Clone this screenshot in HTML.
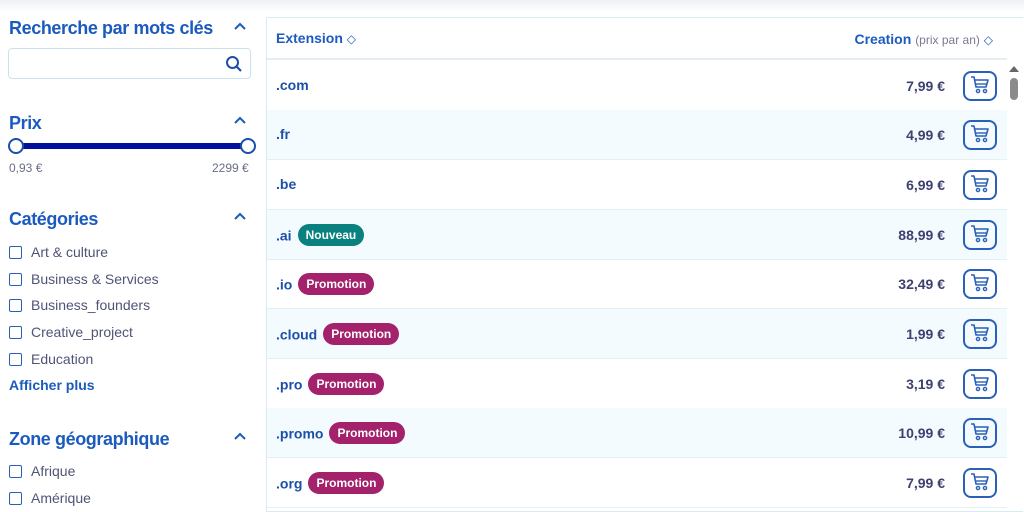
<!DOCTYPE html><html><head><meta charset="utf-8"><style>
*{box-sizing:border-box;margin:0;padding:0}
body{width:1024px;height:508px;overflow:hidden;background:#fff;font-family:"Liberation Sans",sans-serif;position:relative}
.top{position:absolute;left:0;top:0;width:1024px;height:12px;background:linear-gradient(#eef0f6,#fff)}
.h{position:absolute;left:9px;font-size:18px;font-weight:bold;color:#1b5bbf;letter-spacing:-0.4px}
.car{position:absolute;left:234px;width:12px;height:8px}
.search{position:absolute;left:8px;top:48px;width:243px;height:31px;border:1px solid #c8e3ee;border-radius:4px}
.cb{position:absolute;left:9px;font-size:14px;color:#505474}
.cb i{position:absolute;left:0;top:2px;width:13px;height:13px;border:1.6px solid #2a5db5;border-radius:2px}
.cb span{position:absolute;left:22px;top:0;white-space:nowrap}
.tbl{position:absolute;left:266px;top:17px;width:757px;height:495px;border:1px solid #d6ecf2;border-right:none}
.hd{position:absolute;left:0;top:0;width:740px;height:42px;border-bottom:2px solid #e4eef2;font-size:14px;font-weight:bold;color:#1b5bbf}
.row{position:absolute;left:0;width:740px;height:50px;border-bottom:1px solid #e3f0f4}
.row.a{background:#f4fbfe}
.ext{position:absolute;left:9px;top:16px;font-size:14px;font-weight:bold;color:#1b4fa8}
.tag{display:inline-block;margin-left:6px;padding:0 8px;height:22px;line-height:22px;border-radius:11px;color:#fff;font-size:12px;font-weight:bold;vertical-align:middle;position:relative;top:-2px}
.n{background:#08817f}.p{background:#a3226b}
.pr{position:absolute;right:62px;top:17px;font-size:14px;font-weight:bold;color:#3d4170}
.btn{position:absolute;left:696px;top:10px;width:34px;height:30px;border:2px solid #2a60b8;border-radius:8px}
</style></head><body>
<div class="top"></div>
<div class="h" style="top:18px">Recherche par mots clés</div>
<svg class="car" style="top:22px" viewBox="0 0 12 8"><path d="M1 7L6 2L11 7" fill="none" stroke="#1b5bbf" stroke-width="2"/></svg>
<div class="search"><svg style="position:absolute;left:216px;top:6px" width="18" height="18" viewBox="0 0 18 18"><circle cx="7.5" cy="7.5" r="5.5" fill="none" stroke="#1b4fa8" stroke-width="2"/><path d="M11.5 11.5L16 16" stroke="#1b4fa8" stroke-width="2.2"/></svg></div>
<div class="h" style="top:113px">Prix</div>
<svg class="car" style="top:116px" viewBox="0 0 12 8"><path d="M1 7L6 2L11 7" fill="none" stroke="#1b5bbf" stroke-width="2"/></svg>
<div style="position:absolute;left:16px;top:143px;width:232px;height:6px;background:#02109c"></div>
<div style="position:absolute;left:8px;top:138px;width:16px;height:16px;border:2px solid #1b4fa8;border-radius:50%;background:#fff"></div>
<div style="position:absolute;left:240px;top:138px;width:16px;height:16px;border:2px solid #1b4fa8;border-radius:50%;background:#fff"></div>
<div style="position:absolute;left:9px;top:161px;font-size:12px;color:#6a6e86">0,93 €</div>
<div style="position:absolute;left:212px;top:161px;font-size:12px;color:#6a6e86">2299 €</div>
<div class="h" style="top:209px">Catégories</div>
<svg class="car" style="top:212px" viewBox="0 0 12 8"><path d="M1 7L6 2L11 7" fill="none" stroke="#1b5bbf" stroke-width="2"/></svg>
<div class="cb" style="top:244px"><i></i><span>Art &amp; culture</span></div>
<div class="cb" style="top:271px"><i></i><span>Business &amp; Services</span></div>
<div class="cb" style="top:297px"><i></i><span>Business_founders</span></div>
<div class="cb" style="top:324px"><i></i><span>Creative_project</span></div>
<div class="cb" style="top:351px"><i></i><span>Education</span></div>
<div style="position:absolute;left:9px;top:377px;font-size:14px;font-weight:bold;color:#1b5bbf">Afficher plus</div>
<div class="h" style="top:429px">Zone géographique</div>
<svg class="car" style="top:432px" viewBox="0 0 12 8"><path d="M1 7L6 2L11 7" fill="none" stroke="#1b5bbf" stroke-width="2"/></svg>
<div class="cb" style="top:463px"><i></i><span>Afrique</span></div>
<div class="cb" style="top:490px"><i></i><span>Amérique</span></div>

<div class="tbl">
<div class="hd"><span style="position:absolute;left:9px;top:12px">Extension <span style="font-weight:normal;font-size:12px">◇</span></span>
<span style="position:absolute;right:14px;top:13px">Creation <span style="font-weight:normal;font-size:12px;color:#777a90">(prix par an)</span> <span style="font-weight:normal;font-size:12px">◇</span></span></div>
<div class="row" style="top:43px"><div class="ext">.com</div><div class="pr">7,99 €</div><div class="btn"></div></div>
<div class="row a" style="top:92px"><div class="ext">.fr</div><div class="pr">4,99 €</div><div class="btn"></div></div>
<div class="row" style="top:142px"><div class="ext">.be</div><div class="pr">6,99 €</div><div class="btn"></div></div>
<div class="row a" style="top:192px"><div class="ext">.ai<span class="tag n">Nouveau</span></div><div class="pr">88,99 €</div><div class="btn"></div></div>
<div class="row" style="top:241px"><div class="ext">.io<span class="tag p">Promotion</span></div><div class="pr">32,49 €</div><div class="btn"></div></div>
<div class="row a" style="top:291px"><div class="ext">.cloud<span class="tag p">Promotion</span></div><div class="pr">1,99 €</div><div class="btn"></div></div>
<div class="row" style="top:341px"><div class="ext">.pro<span class="tag p">Promotion</span></div><div class="pr">3,19 €</div><div class="btn"></div></div>
<div class="row a" style="top:390px"><div class="ext">.promo<span class="tag p">Promotion</span></div><div class="pr">10,99 €</div><div class="btn"></div></div>
<div class="row" style="top:440px"><div class="ext">.org<span class="tag p">Promotion</span></div><div class="pr">7,99 €</div><div class="btn"></div></div>
<div style="position:absolute;left:742px;top:48px;width:0;height:0;border-left:5px solid transparent;border-right:5px solid transparent;border-bottom:6px solid #666"></div>
<div style="position:absolute;left:743px;top:60px;width:8px;height:22px;border-radius:4px;background:#8a8a8a"></div>
</div>
<svg width="0" height="0" style="position:absolute"><defs><g id="c"><path d="M3 4h3l2 10h10l2-7H7" fill="none" stroke="#2a60b8" stroke-width="1.6" stroke-linejoin="round"/><path d="M8 11h11" stroke="#2a60b8" stroke-width="1.4"/><circle cx="10" cy="18" r="1.6" fill="none" stroke="#2a60b8" stroke-width="1.4"/><circle cx="17" cy="18" r="1.6" fill="none" stroke="#2a60b8" stroke-width="1.4"/></g></defs></svg>
<svg style="position:absolute;left:968px;top:73px" width="24" height="24"><use href="#c"/></svg>
<svg style="position:absolute;left:968px;top:122px" width="24" height="24"><use href="#c"/></svg>
<svg style="position:absolute;left:968px;top:172px" width="24" height="24"><use href="#c"/></svg>
<svg style="position:absolute;left:968px;top:222px" width="24" height="24"><use href="#c"/></svg>
<svg style="position:absolute;left:968px;top:271px" width="24" height="24"><use href="#c"/></svg>
<svg style="position:absolute;left:968px;top:321px" width="24" height="24"><use href="#c"/></svg>
<svg style="position:absolute;left:968px;top:371px" width="24" height="24"><use href="#c"/></svg>
<svg style="position:absolute;left:968px;top:420px" width="24" height="24"><use href="#c"/></svg>
<svg style="position:absolute;left:968px;top:470px" width="24" height="24"><use href="#c"/></svg>
</body></html>
